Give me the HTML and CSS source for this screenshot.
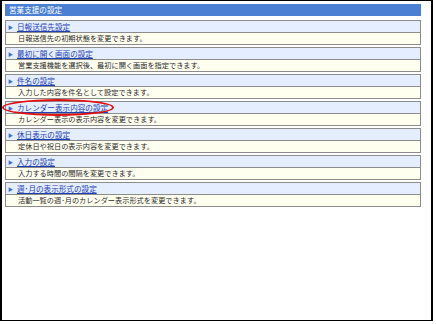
FILE: index.html
```html
<!DOCTYPE html>
<html lang="ja">
<head>
    <meta charset="UTF-8">
    <title>営業支援の設定</title>
    <link rel="stylesheet" href="styles.css">
</head>
<body>
    <div class="frame">
        <div class="title-bar">営業支援の設定</div>

        <div class="item">
            <div class="item-head"><span class="arrow">&#9654;</span><a href="#">日報送信先設定</a></div>
            <div class="item-desc">日報送信先の初期状態を変更できます。</div>
        </div>
        <div class="item">
            <div class="item-head"><span class="arrow">&#9654;</span><a href="#">最初に開く画面の設定</a></div>
            <div class="item-desc">営業支援機能を選択後、最初に開く画面を指定できます。</div>
        </div>
        <div class="item">
            <div class="item-head"><span class="arrow">&#9654;</span><a href="#">件名の設定</a></div>
            <div class="item-desc">入力した内容を件名として設定できます。</div>
        </div>
        <div class="item marked">
            <div class="item-head"><span class="arrow">&#9654;</span><a href="#">カレンダー表示内容の設定</a></div>
            <div class="item-desc">カレンダー表示の表示内容を変更できます。</div>
            <div class="ring"></div>
        </div>
        <div class="item">
            <div class="item-head"><span class="arrow">&#9654;</span><a href="#">休日表示の設定</a></div>
            <div class="item-desc">定休日や祝日の表示内容を変更できます。</div>
        </div>
        <div class="item">
            <div class="item-head"><span class="arrow">&#9654;</span><a href="#">入力の設定</a></div>
            <div class="item-desc">入力する時間の間隔を変更できます。</div>
        </div>
        <div class="item">
            <div class="item-head"><span class="arrow">&#9654;</span><a href="#">週･月の表示形式の設定</a></div>
            <div class="item-desc">活動一覧の週･月のカレンダー表示形式を変更できます。</div>
        </div>
    </div>
</body>
</html>
```

FILE: styles.css
```css
body {
    margin: 0;
    background-color: #fff;
    font-family: "Noto Sans CJK JP", "Noto Sans", sans-serif;
}
.frame {
    box-sizing: border-box;
    width: 433px;
    height: 321px;
    border: 1px solid #000;
    border-left-width: 2px;
    border-right-width: 2px;
    padding: 3px 10px 0 3px;
}
.title-bar {
    height: 12px;
    line-height: 12px;
    background-color: #4a7fd3;
    color: #fff;
    font-size: 7.6px;
    padding-left: 4px;
    margin-bottom: 4px;
}
.item {
    position: relative;
    margin-bottom: 2px;
}
.item-head {
    height: 11px;
    line-height: 11px;
    border: 1px solid #8c8c8c;
    background-color: #e4eeff;
    font-size: 7.6px;
    padding-left: 2px;
}
.arrow {
    display: inline-block;
    width: 9px;
    color: #3b6fd0;
    font-size: 5px;
    vertical-align: 1px;
}
.item-head a {
    color: #1f3fb4;
    text-decoration: underline;
}
.item-desc {
    height: 11px;
    line-height: 11px;
    border: 1px solid #8c8c8c;
    border-top: none;
    background-color: #fffff0;
    color: #2a2a2a;
    font-size: 7.2px;
    padding-left: 12px;
}
.ring {
    position: absolute;
    left: -3px;
    top: -2px;
    width: 108px;
    height: 13px;
    border: 2px solid #e01010;
    border-radius: 50%;
}
```
